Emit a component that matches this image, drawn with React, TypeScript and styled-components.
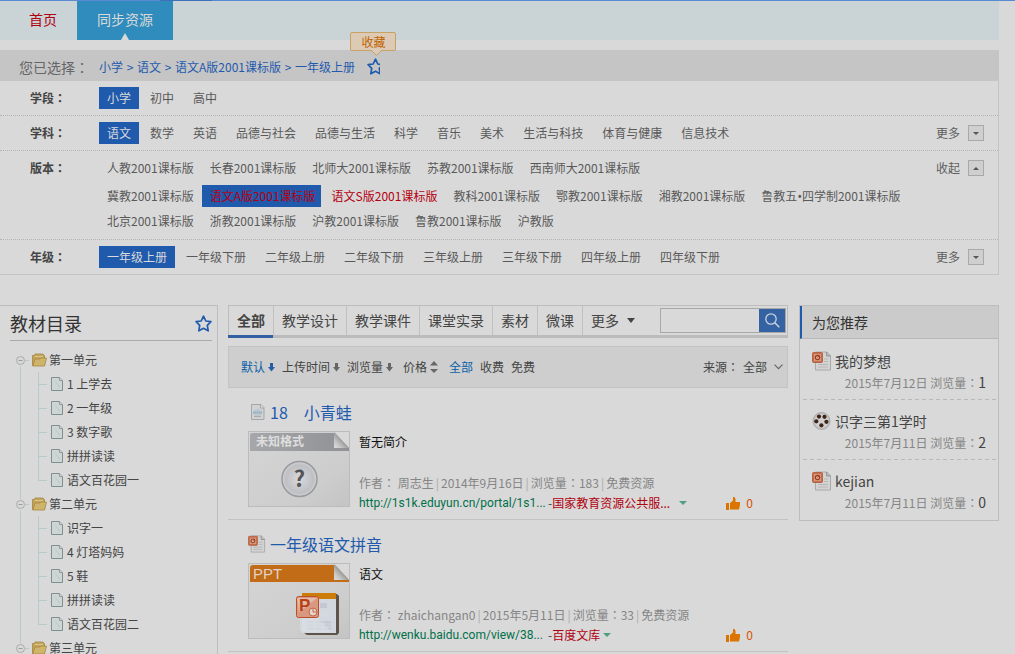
import React from "react";
import styled, { createGlobalStyle, css } from "styled-components";

const GlobalStyle = createGlobalStyle`
  *, *::before, *::after { box-sizing: border-box; }
  html { scrollbar-width: none; }
  body {
    margin: 0;
    background: #d9d9d9;
    color: #444;
    font: 12px/24px "Noto Sans CJK SC", sans-serif;
  }
  ul, h1, h2, h3, p { margin: 0; padding: 0; font-weight: normal; list-style: none; }
  a { color: inherit; text-decoration: none; }
  button, input, select {
    margin: 0; padding: 0; border: 0; border-radius: 0; background: none;
    color: inherit; font: inherit;
  }
  button { cursor: pointer; }
  svg { display: block; flex: none; }
`;

const blue = "#1f5aad";

const TopLine = styled.div`
  height: 1px;
  background: linear-gradient(#3f70b8, #3f70b8) 160px 0 / 52px 1px no-repeat #5a8bd2;
`;
const Page = styled.div`
  margin-right: 16px;
  min-width: 960px;
`;

/* Centred colon and narrow bullet inside Chinese text */
const Colon = styled.span`
  font-family: "Noto Sans CJK TC", sans-serif;
`;
const Bullet = styled.span`
  font-family: "Noto Sans", sans-serif;
`;
const Label = ({ text }: { text: string }) => (
  <>
    {text.split(/([：•])/).map((part, i) =>
      part === "：" ? <Colon key={i}>：</Colon> : part === "•" ? <Bullet key={i}>•</Bullet> : part
    )}
  </>
);

/* ---------- main navigation ---------- */
const Nav = styled.nav`
  display: flex;
  height: 39px;
  padding-left: 9px;
  background: #cad3d6;
  font-size: 14px;
  line-height: 36px;
`;
const NavLink = styled.a<{ $active?: boolean }>`
  padding: 0 20px;
  color: #b00010;
  ${(p) =>
    p.$active &&
    css`
      position: relative;
      background: #2f8cbc;
      color: #d9d9d9;
      &::after {
        content: "";
        position: absolute;
        left: 50%;
        bottom: 0;
        margin-left: -4px;
        border: 4px solid transparent;
        border-top: 0;
        border-bottom: 7px solid #d9d9d9;
      }
    `}
`;

/* ---------- breadcrumb ---------- */
const Crumbs = styled.div`
  display: flex;
  align-items: center;
  height: 31px;
  margin-top: 10px;
  padding: 2px 0 0 19px;
  background: #c5c5c5;
  color: ${blue};
`;
const CrumbLabel = styled.span`
  width: 80px;
  color: #666;
  font-size: 14px;
`;
const CrumbSep = styled.span`
  width: 14px;
  text-align: center;
`;
const Favorite = styled.button`
  position: relative;
  display: flex;
  margin-left: 12px;
`;
const Callout = styled.span`
  position: absolute;
  left: 50%;
  bottom: 100%;
  width: 46px;
  height: 19px;
  margin: 0 0 7px -23px;
  border: 1px solid #c8a164;
  border-radius: 2px;
  background: #dccab5;
  color: #bf6300;
  line-height: 17px;
`;
const CalloutTail = styled.svg`
  position: absolute;
  left: 20px;
  top: 17px;
`;

/* ---------- filters ---------- */
const Filters = styled.section`
  border: solid #c3c3c3;
  border-width: 0 1px 1px 0;
`;
const FilterRow = styled.div`
  display: flex;
  padding: 6px 14px 6px 30px;
  line-height: 22px;
  & + & { border-top: 1px dotted #b4b4b4; }
`;
const FilterName = styled.h3`
  width: 69px;
  font-size: 12px;
  font-weight: bold;
`;
const FilterBody = styled.div`
  flex: 1;
`;
const ChipLine = styled.ul`
  display: flex;
  gap: 3px;
  & + & { margin-top: 3px; }
  &:first-child:not(:last-child) { margin-bottom: 6px; }
  &:first-child + & { margin-top: 0; }
  &:last-child:not(:first-child) { margin-bottom: 1px; }
`;
const Chip = styled.a<{ $selected?: boolean; $red?: boolean; $tight?: boolean }>`
  display: block;
  height: 22px;
  padding: 0 ${(p) => (p.$tight ? "5px" : "8px")} 0 8px;
  white-space: nowrap;
  color: ${(p) => (p.$red ? "#b50010" : p.$selected ? "#d9d9d9" : "#595959")};
  background: ${(p) => (p.$selected ? blue : "none")};
`;
const Expand = styled.button`
  display: flex;
  align-items: center;
  gap: 8px;
  height: 22px;
  color: #5e5e5e;
`;
const ExpandBox = styled.span`
  display: grid;
  place-items: center;
  width: 16px;
  height: 16px;
  border: 1px solid #a9a9a9;
  background: #cfcfcf;
`;

/* ---------- three columns ---------- */
const Columns = styled.div`
  display: flex;
  align-items: flex-start;
  margin-top: 30px;
`;
const Catalog = styled.aside`
  width: 218px;
  padding: 0 5px 0 10px;
  border: solid #bdbdbd;
  border-width: 1px 1px 0 0;
`;
const CatalogHead = styled.header`
  display: flex;
  align-items: center;
  justify-content: space-between;
  height: 35px;
  border-bottom: 1px solid #aaa;
`;
const CatalogTitle = styled.h2`
  font-size: 18px;
  color: #333;
`;
const Tree = styled.ul`
  padding: 7px 0 0 5px;
`;
const Unit = styled.li`
  background: linear-gradient(#b7cbcb, #b7cbcb) 5px 0 / 1px 100% no-repeat;
  &:first-child { background-position: 5px 12px; }
`;
const UnitRow = styled.div`
  display: flex;
  align-items: center;
  height: 24px;
`;
const Toggle = styled.button`
  display: flex;
  margin-right: 3px;
  background: #d9d9d9;
`;
const UnitLink = styled.a`
  display: flex;
  align-items: center;
  gap: 2px;
`;
const Lessons = styled.ul`
  margin-left: 23px;
`;
const Lesson = styled.li`
  display: flex;
  align-items: center;
  height: 24px;
  background:
    linear-gradient(#b7cbcb, #b7cbcb) 0 0 / 1px 100% no-repeat,
    linear-gradient(#b7cbcb, #b7cbcb) 0 12px / 9px 1px no-repeat;
  &:last-child { background-size: 1px 12px, 9px 1px; }
`;
const LessonLink = styled.a`
  display: flex;
  align-items: center;
  gap: 4px;
  padding-left: 13px;
`;

/* ---------- resource list ---------- */
const Main = styled.main`
  flex: 1;
  min-width: 0;
  margin: 0 11px 0 10px;
`;
const Tabs = styled.div`
  display: flex;
  height: 33px;
  border: 1px solid #bdbdbd;
  border-bottom: 3px solid #bbb;
  font-size: 14px;
  line-height: 29px;
`;
const Tab = styled.button<{ $active?: boolean }>`
  position: relative;
  padding: 0 8px;
  border-right: 1px solid #c0c0c0;
  white-space: nowrap;
  font-weight: ${(p) => (p.$active ? "bold" : "normal")};
  ${(p) =>
    p.$active &&
    css`
      &::after {
        content: "";
        position: absolute;
        left: -1px;
        right: 0;
        top: 100%;
        height: 3px;
        background: #3360a3;
      }
    `}
`;
const MoreTab = styled.button`
  display: flex;
  align-items: center;
  gap: 8px;
  padding-left: 8px;
`;
const Search = styled.form`
  display: flex;
  width: 126px;
  height: 25px;
  margin: 2px 1px 0 auto;
  border: 1px solid #a8a8a8;
`;
const SearchInput = styled.input`
  flex: 1;
  min-width: 0;
  padding: 0 4px;
  outline: 0;
`;
const SearchButton = styled.button`
  display: grid;
  place-items: center;
  width: 26px;
  background: #3562a3;
`;
const SortBar = styled.div`
  display: flex;
  align-items: center;
  height: 42px;
  margin-top: 8px;
  padding: 0 4px 0 12px;
  border: 1px solid #c3c3c3;
  background: #cecece;
`;
const SortButton = styled.button<{ $active?: boolean; $gap?: number }>`
  display: flex;
  align-items: center;
  gap: 3px;
  margin-right: ${(p) => p.$gap ?? 7}px;
  white-space: nowrap;
  color: ${(p) => (p.$active ? "#0a5fa8" : "#444")};
`;
const Source = styled.label`
  display: flex;
  align-items: center;
  margin-left: auto;
  white-space: nowrap;
`;
const SourceSelect = styled.select`
  width: 31px;
  margin-left: 4px;
  appearance: none;
  outline: 0;
`;
const Resource = styled.article`
  padding: 12px 20px 6px;
  border-bottom: 1px solid #c3c3c3;
`;
const ResourceTitle = styled.h2`
  height: 24px;
  margin-bottom: 7px;
  color: ${blue};
  font-size: 16px;
  a { display: flex; align-items: center; gap: 4px; white-space: pre; }
`;
const ResourceBody = styled.div`
  display: flex;
  gap: 9px;
  height: 82px;
`;
const Thumb = styled.a`
  width: 102px;
  height: 76px;
  border: 1px solid #bcbcbc;
`;
const Details = styled.div`
  display: flex;
  flex: 1;
  flex-direction: column;
  min-width: 0;
  line-height: 20px;
  white-space: nowrap;
`;
const Summary = styled.p`
  margin-bottom: auto;
  color: #111;
  line-height: 22px;
`;
const Meta = styled.p`
  color: #858585;
`;
const MetaSep = styled.span`
  margin: 0 2px;
  color: #aaa;
`;
const LinkLine = styled.div`
  display: flex;
  align-items: center;
  height: 20px;
`;
const Url = styled.a`
  min-width: 189px;
  color: #00704a;
  font-family: Roboto, sans-serif;
`;
const Site = styled.a`
  color: #b00010;
`;
const SiteToggle = styled.button<{ $far?: boolean }>`
  margin-left: ${(p) => (p.$far ? 9 : 3)}px;
`;
const Like = styled.button`
  display: flex;
  align-items: center;
  gap: 6px;
  margin: 0 15px 0 auto;
  color: #d85000;
`;

/* ---------- recommendations ---------- */
const Recommend = styled.aside`
  width: 200px;
  border: 1px solid #bdbdbd;
`;
const RecommendTitle = styled.h2`
  height: 33px;
  padding-left: 10px;
  border-left: 2px solid ${blue};
  border-bottom: 1px solid #b8b8b8;
  background: #cbcbcb;
  color: #333;
  font-size: 14px;
  line-height: 33px;
`;
const RecommendItem = styled.li`
  height: 60px;
  margin-left: 3px;
  padding: 11px 12px 0 9px;
  & + & { background: linear-gradient(90deg, #b8b8b8 60%, transparent 60%) 0 0 / 7px 1px repeat-x; }
  &:last-child { height: 61px; }
`;
const RecommendLink = styled.a`
  display: flex;
  align-items: center;
  gap: 3px;
  height: 22px;
  font-size: 14px;
`;
const RecommendMeta = styled.p`
  color: #858585;
  line-height: 20px;
  text-align: right;
  white-space: nowrap;
`;
const Count = styled.span`
  color: #444;
  font-size: 14px;
`;

/* ---------- drawings ---------- */
const starPath = "M8.5 1.2 10.8 6 15.9 6.7 12.3 10.4 13.2 15.8 8.5 13.3 3.8 15.8 4.7 10.4 1.1 6.7 6.2 6Z";
const Star = ({ width = 17 }: { width?: number }) => (
  <svg width={width} height="17" viewBox={`0 0 ${width} 17`}>
    <path d={starPath} fill="none" stroke={blue} strokeWidth="1.7" strokeLinejoin="round" />
  </svg>
);
const Caret = ({ up, color = "#555", w = 8, h = 4 }: { up?: boolean; color?: string; w?: number; h?: number }) => (
  <svg width={w} height={h} viewBox="0 0 8 4" preserveAspectRatio="none">
    <path d={up ? "M0 4 4 0 8 4Z" : "M0 0H8L4 4Z"} fill={color} />
  </svg>
);
const DownArrow = ({ color = "#666" }: { color?: string }) => (
  <svg width="7" height="9" viewBox="0 0 7 9">
    <path d="M2 0H5V4H7L3.5 8.5 0 4H2Z" fill={color} />
  </svg>
);
const UpDown = () => (
  <svg width="8" height="12" viewBox="0 0 8 12">
    <path d="M0 4.5 4 0 8 4.5ZM0 8H8L4 12Z" fill="#666" />
  </svg>
);
const Minus = () => (
  <svg width="14" height="11" viewBox="0 0 14 11">
    <path d="M10 5.5H14" stroke="#b7cbcb" />
    <circle cx="5.5" cy="5.5" r="4" fill="#d9d9d9" stroke="#aaa" />
    <path d="M3.5 5.5H7.5" stroke="#999" />
  </svg>
);
const Folder = () => (
  <svg width="15" height="14" viewBox="0 0 15 14">
    <path d="M.5 12.5V2.5H2L3 1H11L12.5 2.5V12.5Z" fill="#c4a55c" stroke="#a5853f" strokeWidth=".8" />
    <path d="M3 3.500H11" stroke="#d8c58d" />
    <path d="M.8 13 3 6H8L9 5H14.500L12.500 13Z" fill="#cfb56c" stroke="#a9873b" strokeWidth=".8" />
  </svg>
);
const Doc = () => (
  <svg width="12" height="14" viewBox="0 0 12 14">
    <path d="M.5.5H8.5L11.5 3.5V13.5H.5Z" fill="#cdd6d5" stroke="#7d908f" />
    <path d="M8.500.5V3.500H11.500" fill="#d9d9d9" stroke="#7d908f" strokeWidth=".8" />
    <path d="M2 2 9 9V12Z" fill="#b5c6c4" opacity=".6" />
  </svg>
);
const UnknownDoc = () => (
  <svg width="18" height="18" viewBox="0 0 18 18">
    <path d="M3.5 1.5H13L16 4.5V16.5H3.5Z" fill="#d0d3d4" stroke="#a4a7a9" />
    <path d="M12.5 1.5V5H16" fill="#e0e0e0" stroke="#999" strokeWidth=".8" />
    <circle cx="9.7" cy="10" r="4.2" fill="#bfc8ce" />
    <path d="M5 9.5H14.5" stroke="#8fb0c0" strokeWidth="2" strokeDasharray="1.4 .5" />
    <path d="M6 13.5H13" stroke="#aaa" />
  </svg>
);
const PptDoc = ({ size = 20 }: { size?: number }) => (
  <svg width={size} height={size} viewBox="0 0 20 20">
    <path d="M3.5 1H15L18.5 4.5V19H3.5Z" fill="#d3d3d3" stroke="#a5a5a5" strokeWidth=".9" />
    <path d="M14.5 1V5H18.5" fill="#bbb" stroke="#888" strokeWidth=".8" />
    <path d="M12 8H16M12 10.5H16M6 13.5H16M6 16H16" stroke="#b7b7b7" />
    <rect x=".5" y="1.5" width="10" height="10" rx="1" fill="#c96c4a" stroke="#b36548" />
    <rect x="2" y="3" width="7" height="7" fill="#d29a80" />
    <circle cx="5.5" cy="6.5" r="2.1" fill="#d9b8a8" stroke="#a3391a" strokeWidth="1.2" />
    <path d="M5.5 6.5 7 4.500" stroke="#a3391a" />
  </svg>
);
const Reel = () => (
  <svg width="20" height="20" viewBox="0 0 20 20">
    <circle cx="9.5" cy="10" r="8.5" fill="#bdbdc0" stroke="#aaa" />
    <circle cx="9.5" cy="10" r="7" fill="#cfcfd1" />
    <g fill="#3d2415">
      <circle cx="7" cy="5.6" r="2.1" />
      <circle cx="12.5" cy="5.8" r="2.1" />
      <circle cx="4.3" cy="10.3" r="2.1" />
      <circle cx="14.4" cy="10.8" r="2.1" />
      <circle cx="9.4" cy="14.3" r="2.1" />
    </g>
  </svg>
);
const ThumbUp = () => (
  <svg width="14" height="13" viewBox="0 0 14 13">
    <path d="M0 6H3V13H0ZM4 6 7 3.5V0H8.5L9.5 2V5H14V8L13 12.5H4Z" fill="#db7500" />
  </svg>
);
const Fold = () => (
  <>
    <path d="M85 0H100V16Z" fill="#d9d9d9" />
    <path d="M85 0V16H100Z" fill="url(#fold)" />
  </>
);
const ThumbDefs = () => (
  <defs>
    <linearGradient id="fold" x1="0" y1="1" x2=".6" y2=".4">
      <stop offset="0" stopColor="#dcdcdc" />
      <stop offset=".4" stopColor="#c6c8c6" />
      <stop offset="1" stopColor="#8c8c8c" />
    </linearGradient>
    <linearGradient id="paper" x1="0" y1="0" x2="1" y2="1">
      <stop offset="0" stopColor="#d5d5d5" />
      <stop offset=".7" stopColor="#cdcdcd" />
      <stop offset="1" stopColor="#c4c4c4" />
    </linearGradient>
    <linearGradient id="gray" x1="0" y1="0" x2="1" y2="0">
      <stop offset="0" stopColor="#a6a7aa" />
      <stop offset="1" stopColor="#909194" />
    </linearGradient>
    <radialGradient id="ball">
      <stop offset="0" stopColor="#d9d9dc" />
      <stop offset=".8" stopColor="#bfc0c4" />
      <stop offset="1" stopColor="#d4d4d6" />
    </radialGradient>
  </defs>
);
const UnknownThumb = () => (
  <svg width="100" height="74" viewBox="0 0 100 74">
    <ThumbDefs />
    <rect width="100" height="74" fill="url(#paper)" />
    <path d="M1 3Q1 1 3 1H100V19H1Z" fill="url(#gray)" />
    <Fold />
    <text x="7" y="14" fill="#dedede" fontSize="12" fontWeight="bold">未知格式</text>
    <circle cx="50.500" cy="47" r="17.500" fill="url(#ball)" stroke="#999a9e" strokeWidth="1.500" />
    <text x="50.500" y="55" fill="#555" fontSize="22" fontWeight="bold" textAnchor="middle">?</text>
  </svg>
);
const PptThumb = () => (
  <svg width="100" height="74" viewBox="0 0 100 74">
    <rect width="100" height="74" fill="url(#paper)" />
    <path d="M1 4Q1 1 4 1H100V18H1Z" fill="#c26c18" />
    <Fold />
    <text x="4" y="15" fill="#e0d4c8" fontSize="15" fontFamily="Liberation Sans, sans-serif">PPT</text>
    <path d="M55 32Q55 30 58 30H88L90 32V69L88 71H58L55 69Z" fill="#5d554a" />
    <path d="M53 29H87V69H53Z" fill="#d3d8df" />
    <path d="M53 29H87V35H53Z" fill="#cc7c08" />
    <path d="M71 39H78V44H71ZM58 57H82V66H58Z" fill="#c3c9d2" />
    <path d="M58 60H82M58 63H82M66 57V66M74 57V66M71 48H82M71 51H82" stroke="#d5dae0" />
    <path d="M51 54 55 46H70V56L82 67Q66 70 51 67Z" fill="#dde1e6" opacity=".55" />
    <rect x="47.500" y="32.500" width="22" height="21" rx="2" fill="#d99880" stroke="#bd4e28" />
    <path d="M48 34H68L50 48Z" fill="#e0bba9" />
    <text x="50" y="47" fill="#b83f13" fontSize="17" fontWeight="bold" fontFamily="Liberation Sans, sans-serif">P</text>
    <circle cx="64" cy="48" r="4" fill="#e4d5cd" stroke="#c96848" />
    <path d="M64 48V44M64 48H68" stroke="#c96848" />
  </svg>
);

/* ---------- data ---------- */
const grades = ["一年级上册", "一年级下册", "二年级上册", "二年级下册", "三年级上册", "三年级下册", "四年级上册", "四年级下册"];
const filters: { name: string; lines: string[][]; selected: string; toggle?: string }[] = [
  { name: "学段", lines: [["小学", "初中", "高中"]], selected: "小学" },
  {
    name: "学科",
    lines: [["语文", "数学", "英语", "品德与社会", "品德与生活", "科学", "音乐", "美术", "生活与科技", "体育与健康", "信息技术"]],
    selected: "语文",
    toggle: "更多",
  },
  {
    name: "版本",
    lines: [
      ["人教2001课标版", "长春2001课标版", "北师大2001课标版", "苏教2001课标版", "西南师大2001课标版"],
      ["冀教2001课标版", "语文A版2001课标版", "语文S版2001课标版", "教科2001课标版", "鄂教2001课标版", "湘教2001课标版", "鲁教五•四学制2001课标版"],
      ["北京2001课标版", "浙教2001课标版", "沪教2001课标版", "鲁教2001课标版", "沪教版"],
    ],
    selected: "语文A版2001课标版",
    toggle: "收起",
  },
  { name: "年级", lines: [grades], selected: "一年级上册", toggle: "更多" },
];
const units = [
  { name: "第一单元", lessons: ["1 上学去", "2 一年级", "3 数字歌", "拼拼读读", "语文百花园一"] },
  { name: "第二单元", lessons: ["识字一", "4 灯塔妈妈", "5 鞋", "拼拼读读", "语文百花园二"] },
  { name: "第三单元", lessons: [] },
];
const crumbs = ["小学", "语文", "语文A版2001课标版", "一年级上册"];
const resources = [
  {
    title: "18　小青蛙", icon: <UnknownDoc />, thumb: <UnknownThumb />, summary: "暂无简介",
    meta: ["作者： 周志生", "2014年9月16日", "浏览量：183", "免费资源"],
    url: "http://1s1k.eduyun.cn/portal/1s1...", site: "国家教育资源公共服...", far: true,
  },
  {
    title: "一年级语文拼音", icon: <PptDoc size={18} />, thumb: <PptThumb />, summary: "语文",
    meta: ["作者： zhaichangan0", "2015年5月11日", "浏览量：33", "免费资源"],
    url: "http://wenku.baidu.com/view/38...", site: "百度文库", far: false,
  },
];
const recommended = [
  { title: "我的梦想", date: "2015年7月12日", count: 1, icon: <PptDoc /> },
  { title: "识字三第1学时", date: "2015年7月11日", count: 2, icon: <Reel /> },
  { title: "kejian", date: "2015年7月11日", count: 0, icon: <PptDoc /> },
];

export default function App() {
  return (
    <>
      <GlobalStyle />
      <TopLine />
      <Page>
        <Nav>
          <NavLink href="#">首页</NavLink>
          <NavLink href="#" $active>同步资源</NavLink>
        </Nav>
        <Crumbs>
          <CrumbLabel><Label text="您已选择：" /></CrumbLabel>
          {crumbs.map((c, i) => (
            <React.Fragment key={c}>
              {i > 0 && <CrumbSep>&gt;</CrumbSep>}
              <a href="#">{c}</a>
            </React.Fragment>
          ))}
          <Favorite aria-label="收藏">
            <Star width={13} />
            <Callout>
              收藏
              <CalloutTail width="11" height="6" viewBox="0 0 11 6">
                <path d="M0 0 5.500 5.500 11 0" fill="#dccab5" stroke="#c8a164" />
              </CalloutTail>
            </Callout>
          </Favorite>
        </Crumbs>

        <Filters>
          {filters.map((f) => (
            <FilterRow key={f.name}>
              <FilterName><Label text={`${f.name}：`} /></FilterName>
              <FilterBody>
                {f.lines.map((line) => (
                  <ChipLine key={line[0]}>
                    {line.map((text) => (
                      <li key={text}>
                        <Chip
                          href="#"
                          $selected={text === f.selected}
                          $red={/^语文[AS]/.test(text)}
                          $tight={text.includes("2001")}
                        >
                          <Label text={text} />
                        </Chip>
                      </li>
                    ))}
                  </ChipLine>
                ))}
              </FilterBody>
              {f.toggle && (
                <Expand>
                  {f.toggle}
                  <ExpandBox><Caret up={f.toggle === "收起"} w={6} h={3} /></ExpandBox>
                </Expand>
              )}
            </FilterRow>
          ))}
        </Filters>

        <Columns>
          <Catalog>
            <CatalogHead>
              <CatalogTitle>教材目录</CatalogTitle>
              <button aria-label="收藏目录"><Star /></button>
            </CatalogHead>
            <Tree>
              {units.map((u) => (
                <Unit key={u.name}>
                  <UnitRow>
                    <Toggle aria-label="折叠"><Minus /></Toggle>
                    <UnitLink href="#"><Folder />{u.name}</UnitLink>
                  </UnitRow>
                  <Lessons>
                    {u.lessons.map((l) => (
                      <Lesson key={l}><LessonLink href="#"><Doc />{l}</LessonLink></Lesson>
                    ))}
                  </Lessons>
                </Unit>
              ))}
            </Tree>
          </Catalog>

          <Main>
            <Tabs>
              {["全部", "教学设计", "教学课件", "课堂实录", "素材", "微课"].map((t, i) => (
                <Tab key={t} $active={i === 0}>{t}</Tab>
              ))}
              <MoreTab>更多<Caret h={5} color="#444" /></MoreTab>
              <Search>
                <SearchInput aria-label="搜索" />
                <SearchButton type="button" aria-label="搜索">
                  <svg width="15" height="15" viewBox="0 0 15 15">
                    <circle cx="6" cy="6" r="5.200" fill="none" stroke="#c9d2de" strokeWidth="1.300" />
                    <path d="M9.800 9.800 14.300 14.300" stroke="#c9d2de" strokeWidth="1.500" />
                  </svg>
                </SearchButton>
              </Search>
            </Tabs>
            <SortBar>
              <SortButton $active>默认<DownArrow color="#2a5ca5" /></SortButton>
              <SortButton>上传时间<DownArrow /></SortButton>
              <SortButton $gap={10}>浏览量<DownArrow /></SortButton>
              <SortButton $gap={11}>价格<UpDown /></SortButton>
              <SortButton $active>全部</SortButton>
              <SortButton>收费</SortButton>
              <SortButton>免费</SortButton>
              <Source>
                <Label text="来源：" />
                <SourceSelect><option>全部</option></SourceSelect>
                <svg width="9" height="6" viewBox="0 0 9 6">
                  <path d="M.5.7 4.500 4.700 8.500.7" fill="none" stroke="#666" strokeWidth="1.200" />
                </svg>
              </Source>
            </SortBar>
            {resources.map((r) => (
              <Resource key={r.title}>
                <ResourceTitle><a href="#">{r.icon}{r.title}</a></ResourceTitle>
                <ResourceBody>
                  <Thumb href="#">{r.thumb}</Thumb>
                  <Details>
                    <Summary>{r.summary}</Summary>
                    <Meta>
                      {r.meta.map((m, i) => (
                        <React.Fragment key={m}>{i > 0 && <MetaSep>|</MetaSep>}<Label text={m} /></React.Fragment>
                      ))}
                    </Meta>
                    <LinkLine>
                      <Url href="#">{r.url}</Url>-<Site href="#">{r.site}</Site>
                      <SiteToggle $far={r.far} aria-label="更多来源"><Caret color="#50a080" /></SiteToggle>
                      <Like><ThumbUp />0</Like>
                    </LinkLine>
                  </Details>
                </ResourceBody>
              </Resource>
            ))}
          </Main>

          <Recommend>
            <RecommendTitle>为您推荐</RecommendTitle>
            <ul>
              {recommended.map((r) => (
                <RecommendItem key={r.title}>
                  <RecommendLink href="#">{r.icon}{r.title}</RecommendLink>
                  <RecommendMeta>{r.date} <Label text="浏览量：" /><Count>{r.count}</Count></RecommendMeta>
                </RecommendItem>
              ))}
            </ul>
          </Recommend>
        </Columns>
      </Page>
    </>
  );
}
